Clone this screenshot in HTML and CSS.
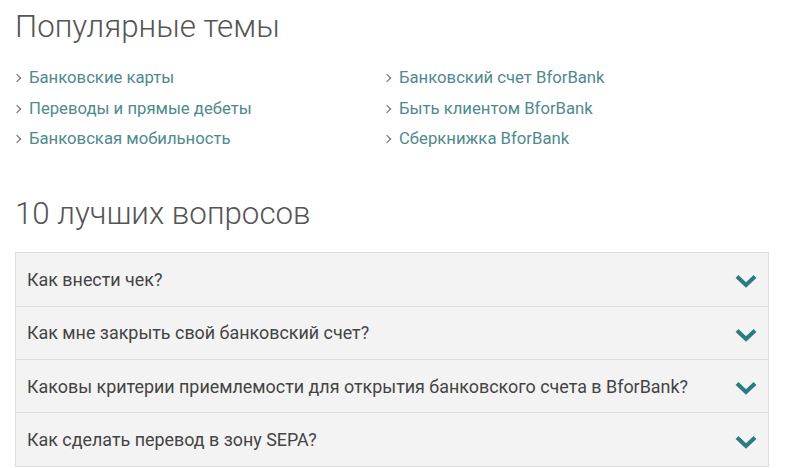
FILE: index.html
```html
<!DOCTYPE html>
<html lang="ru">
<head>
    <meta charset="UTF-8">
    <meta name="viewport" content="width=device-width, initial-scale=1.0">
    <title>Популярные темы</title>
    <link rel="stylesheet" href="styles.css">
</head>
<body>
    <div class="container">
        <h2 class="section-title">Популярные темы</h2>
        <ul class="topics">
            <li><a href="#">Банковские карты</a></li>
            <li><a href="#">Банковский счет BforBank</a></li>
            <li><a href="#">Переводы и прямые дебеты</a></li>
            <li><a href="#">Быть клиентом BforBank</a></li>
            <li><a href="#">Банковская мобильность</a></li>
            <li><a href="#">Сберкнижка BforBank</a></li>
        </ul>

        <h2 class="section-title second">10 лучших вопросов</h2>
        <div class="faq">
            <div class="faq-item">
                <span class="question">Как внести чек?</span>
                <svg class="chevron" viewBox="0 0 22 14"><path d="M2 2.5 L11 11 L20 2.5"/></svg>
            </div>
            <div class="faq-item">
                <span class="question">Как мне закрыть свой банковский счет?</span>
                <svg class="chevron" viewBox="0 0 22 14"><path d="M2 2.5 L11 11 L20 2.5"/></svg>
            </div>
            <div class="faq-item">
                <span class="question">Каковы критерии приемлемости для открытия банковского счета в BforBank?</span>
                <svg class="chevron" viewBox="0 0 22 14"><path d="M2 2.5 L11 11 L20 2.5"/></svg>
            </div>
            <div class="faq-item">
                <span class="question">Как сделать перевод в зону SEPA?</span>
                <svg class="chevron" viewBox="0 0 22 14"><path d="M2 2.5 L11 11 L20 2.5"/></svg>
            </div>
        </div>
    </div>
</body>
</html>
```

FILE: styles.css
```css
* {
    margin: 0;
    padding: 0;
    box-sizing: border-box;
}

body {
    font-family: Roboto, "Liberation Sans", sans-serif;
    background: #fff;
    color: #444;
}

.container {
    width: 754px;
    margin-left: 15px;
    padding-top: 8px;
}

.section-title {
    font-size: 31.3px;
    font-weight: 300;
    line-height: 38px;
    color: #555;
}

.section-title.second {
    margin-top: 40px;
}

.topics {
    list-style: none;
    display: grid;
    grid-template-columns: 370px 1fr;
    margin-top: 17px;
}

.topics li {
    line-height: 30.5px;
    font-size: 16.7px;
}

.topics li::before {
    content: "";
    display: inline-block;
    width: 5px;
    height: 5px;
    border-right: 1.5px solid #666;
    border-top: 1.5px solid #666;
    transform: rotate(45deg);
    margin: 0 9px 2px -1px;
}

.topics a {
    color: #4f8a8e;
    text-decoration: none;
}

.faq {
    margin-top: 19px;
    border: 1px solid #ddd;
    background: #f3f3f3;
}

.faq-item {
    display: flex;
    align-items: center;
    justify-content: space-between;
    height: 53.3px;
    padding: 0 11px 0 11px;
    border-top: 1px solid #ddd;
}

.faq-item:first-child {
    border-top: none;
}

.question {
    font-size: 17.9px;
    color: #444;
}

.chevron {
    width: 22px;
    height: 14px;
    margin-top: 4px;
    fill: none;
    stroke: #2b7c80;
    stroke-width: 4;
}
```
